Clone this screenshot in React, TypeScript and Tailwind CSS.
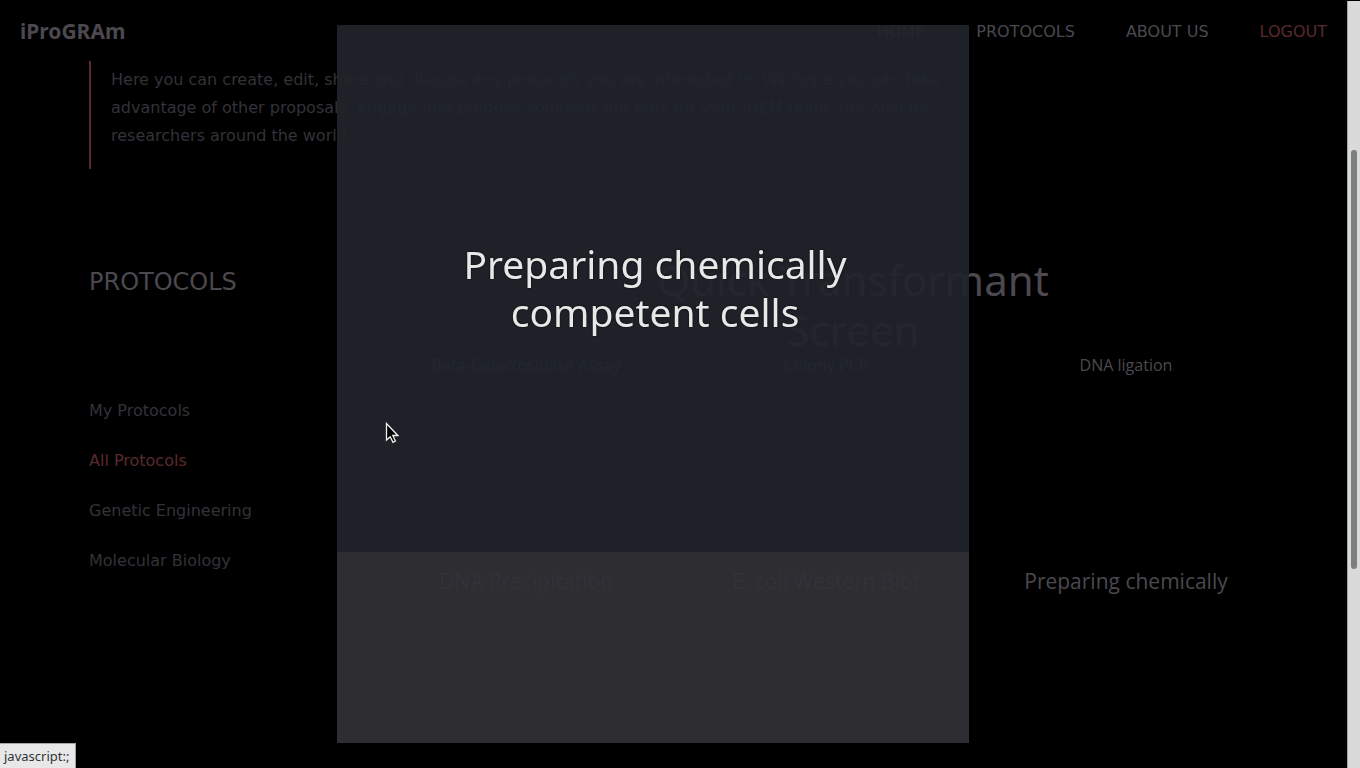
const navLinks = ["HOME", "PROTOCOLS", "ABOUT US"];

const categories = ["My Protocols", "All Protocols", "Genetic Engineering", "Molecular Biology"];

const smallCards = ["Beta-Galactosidase Assay", "Colony PCR", "DNA ligation"];
const largeCards = ["DNA Precipitation", "E. coli Western Blot", "Preparing chemically"];

function Header() {
  return (
    <header className="flex h-[61px] items-center justify-between px-5 pt-[3px]">
      <a href="#" className="font-['Noto_Sans',sans-serif] text-[21px] font-bold text-[#4b494f]">
        iProGRAm
      </a>
      <nav className="flex gap-[51px] text-base text-[#4b494f]">
        {navLinks.map((label) => (
          <a key={label} href="#">
            {label}
          </a>
        ))}
        <a href="#" className="text-[#5a2a2c]">
          LOGOUT
        </a>
      </nav>
    </header>
  );
}

function Sidebar() {
  return (
    <aside className="w-[287px] shrink-0 pt-[9px]">
      <h2 className="text-2xl leading-9 text-[#4b494f]">PROTOCOLS</h2>
      <ul className="mt-[86px] flex flex-col text-base leading-[50px] text-[#333238]">
        {categories.map((label) => (
          <li key={label}>
            <a href="#" className={label === "All Protocols" ? "text-[#5a2a2c]" : ""}>
              {label}
            </a>
          </li>
        ))}
      </ul>
    </aside>
  );
}

function Protocols() {
  return (
    <section className="max-w-[900px] flex-1 text-center font-['Open_Sans',sans-serif] text-[#4b494f]">
      <h2 className="pl-[54px] font-['Noto_Sans',sans-serif] text-[42px] leading-[50px] font-normal">
        Quick Transformant
        <br />
        Screen
      </h2>
      <div className="grid grid-cols-3 text-base leading-5">
        {smallCards.map((label) => (
          <a key={label} href="#">
            {label}
          </a>
        ))}
      </div>
      <div className="mt-[191px] grid grid-cols-3 text-[21px] leading-[30px]">
        {largeCards.map((label) => (
          <a key={label} href="#">
            {label}
          </a>
        ))}
      </div>
    </section>
  );
}

function ProtocolDialog() {
  return (
    <div className="fixed inset-0 flex justify-center py-[25px] pr-[54px]">
      <div role="dialog" aria-labelledby="dialog-title" className="flex w-[632px] flex-col">
        <div className="flex flex-1 justify-center bg-[#20252bed] pt-[215px] pl-1">
          <h1
            id="dialog-title"
            className="w-[440px] text-center font-['Noto_Sans',sans-serif] text-[39px] leading-[48px] font-normal text-[#e8e8e8] [text-shadow:0_0_2px_#000]"
          >
            Preparing chemically competent cells
          </h1>
        </div>
        <div className="h-[191px] bg-[#303036ed]" />
      </div>
    </div>
  );
}

function Pointer() {
  return (
    <svg aria-hidden="true" className="absolute top-[422px] left-[385px] h-[22px] w-[14px]" viewBox="0 0 14 22">
      <path
        d="M1.5 1.5V18L5.2 14.7L8 20.3L10.4 19L7.8 13.5H12.8Z"
        fill="#000"
        stroke="#f2f2f2"
        strokeWidth="1.3"
      />
    </svg>
  );
}

export default function App() {
  return (
    <div className="relative flex h-screen overflow-hidden bg-black font-['DejaVu_Sans',sans-serif]">
      <div className="min-w-0 flex-1">
        <Header />
        <main className="pr-[71px] pl-[89px]">
          <div className="h-[108px] max-w-[902px] border-l-2 border-[#5a2a2c] pt-[5px] pl-5">
            <p className="text-base leading-7 text-[#333238]">
              Here you can create, edit, share and discuss any protocols you are interested in. We hope you can take
              advantage of other proposals, engage and propose solutions not only for your iGEM team, but also for
              researchers around the world.
            </p>
          </div>
          <div className="flex pt-[86px]">
            <Sidebar />
            <Protocols />
          </div>
        </main>
      </div>
      <ProtocolDialog />
      <div className="relative mt-px flex w-[13px] shrink-0 justify-center border-l border-[#a5a5a5] bg-[#dadada] pt-[149px]">
        <div className="h-[419px] w-[6px] rounded-full bg-[#7b7f7e]" />
      </div>
      <Pointer />
      <div className="absolute bottom-0 left-0 border-t border-r border-[#a5a5a5] bg-[#e8e8e8] pr-[6px] pl-1 font-['Noto_Sans',sans-serif] text-[13px] leading-6 text-[#303538]">
        javascript:;
      </div>
    </div>
  );
}
